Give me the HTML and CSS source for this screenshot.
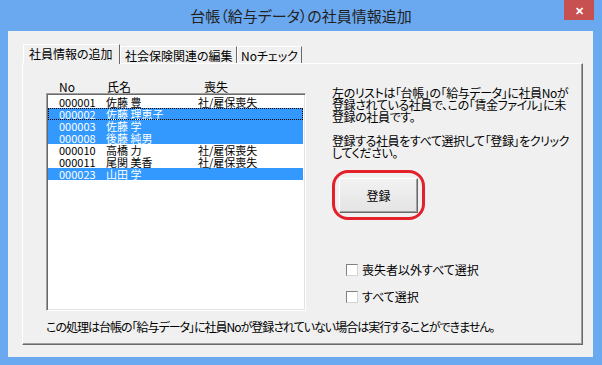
FILE: index.html
```html
<!DOCTYPE html>
<html lang="ja">
<head>
  <meta charset="UTF-8" />
  <title>台帳（給与データ）の社員情報追加</title>
  <link rel="stylesheet" href="styles.css">
</head>
<body>
  <div class="window">
    <div class="titlebar">
      <span class="title">台帳（給与データ）の社員情報追加</span>
      <span class="close">✕</span>
    </div>

    <div class="client">
      <div class="tabs">
        <div class="tab tab-add active">社員情報の追加</div>
        <div class="tab tab-ins">社会保険関連の編集</div>
        <div class="tab tab-no">Noチェック</div>
      </div>

      <div class="panel">
        <div class="panel-body">
          <div class="list-col">
            <div class="list-head">
              <span class="c-no">No</span>
              <span class="c-name">氏名</span>
              <span class="c-loss">喪失</span>
            </div>
            <div class="listbox">
              <div class="row"><span class="c-no">000001</span><span class="c-name">佐藤 豊</span><span class="c-loss">社/雇保喪失</span></div>
              <div class="row selected focus"><span class="c-no">000002</span><span class="c-name">佐藤 理恵子</span><span class="c-loss"></span></div>
              <div class="row selected"><span class="c-no">000003</span><span class="c-name">佐藤 学</span><span class="c-loss"></span></div>
              <div class="row selected"><span class="c-no">000008</span><span class="c-name">後藤 純男</span><span class="c-loss"></span></div>
              <div class="row"><span class="c-no">000010</span><span class="c-name">高橋 力</span><span class="c-loss">社/雇保喪失</span></div>
              <div class="row"><span class="c-no">000011</span><span class="c-name">尾関 美香</span><span class="c-loss">社/雇保喪失</span></div>
              <div class="row selected"><span class="c-no">000023</span><span class="c-name">山田 学</span><span class="c-loss"></span></div>
            </div>
          </div>

          <div class="side">
            <p class="info">
              <span class="line">左のリストは「台帳」の「給与データ」に社員Noが</span>
              <span class="line">登録されている社員で、この「賃金ファイル」に未</span>
              <span class="line">登録の社員です。</span>
            </p>
            <p class="info">
              <span class="line">登録する社員をすべて選択して「登録」をクリック</span>
              <span class="line">してください。</span>
            </p>
            <div class="btn-ring">
              <button class="btn">登録</button>
            </div>
            <label class="check check-first"><span class="box"></span>喪失者以外すべて選択</label>
            <label class="check"><span class="box"></span>すべて選択</label>
          </div>
        </div>

        <p class="note">この処理は台帳の「給与データ」に社員Noが登録されていない場合は実行することができません。</p>
      </div>
    </div>
  </div>
</body>
</html>
```

FILE: styles.css
```css
/* General */
body {
  margin: 0;
  font-family: "Noto Sans CJK JP", "Noto Sans", sans-serif;
  font-size: 12px;
  color: #000;
  font-feature-settings: "palt";
}

p {
  margin: 0;
}

/* Window frame */
.window {
  width: 602px;
  height: 365px;
  background: #6aa8f0;
  display: flex;
  flex-direction: column;
}

.titlebar {
  position: relative;
  height: 31px;
  display: flex;
  align-items: center;
  justify-content: center;
}

.title {
  font-size: 15px;
  color: #222;
  line-height: 31px;
}

.close {
  position: absolute;
  top: 0;
  right: 8px;
  width: 30px;
  height: 20px;
  background: #c75050;
  color: #fff;
  font-size: 11px;
  font-weight: bold;
  line-height: 20px;
  text-align: center;
}

.client {
  margin: 0 9px 8px 8px;
  height: 326px;
  background: #f0f0f0;
  padding: 13px 0 0 14px;
  box-sizing: border-box;
}

/* Tabs */
.tabs {
  display: flex;
  align-items: flex-end;
  margin-left: 1px;
  height: 19px;
  position: relative;
  z-index: 1;
}

.tab {
  height: 17px;
  line-height: 17px;
  box-sizing: border-box;
  padding-left: 4px;
  border-left: 1px solid #fff;
  border-top: 1px solid #fff;
  border-right: 1px solid #696969;
  white-space: nowrap;
  background: #f0f0f0;
}

.tab.active {
  height: 20px;
  line-height: 18px;
  margin-bottom: -1px;
  padding-left: 5px;
}

.tab-add { width: 97px; }
.tab-ins { width: 117px; }
.tab-no { padding: 0 3px 0 3px; }

/* Panel */
.panel {
  width: 561px;
  height: 282px;
  box-sizing: border-box;
  border-top: 1px solid #fff;
  border-left: 1px solid #fff;
  border-right: 1px solid #696969;
  border-bottom: 1px solid #696969;
  box-shadow: inset -1px -1px 0 #a0a0a0;
  padding: 16px 0 0 23px;
}

.panel-body {
  display: flex;
  height: 231px;
}

/* List */
.list-col {
  width: 260px;
  display: flex;
  flex-direction: column;
}

.list-head {
  display: flex;
  height: 13px;
  line-height: 13px;
  padding-left: 13px;
}

.list-head .c-no { width: 48px; }
.list-head .c-name { width: 97px; }

.listbox {
  height: 218px;
  box-sizing: border-box;
  background: #fff;
  border-top: 1px solid #a0a0a0;
  border-left: 1px solid #a0a0a0;
  border-right: 1px solid #fff;
  border-bottom: 1px solid #fff;
  box-shadow: inset 1px 1px 0 #696969, inset -1px -1px 0 #e3e3e3;
  padding: 2px 2px 0 1px;
}

.row {
  display: flex;
  height: 12px;
  line-height: 12px;
  font-size: 11px;
  padding-left: 11px;
  box-sizing: border-box;
  white-space: nowrap;
}

.row.selected {
  background: #3399ff;
  color: #fff;
}

.row.focus {
  outline: 1px dotted #000;
  outline-offset: -1px;
}

.row .c-no { width: 47px; }
.row .c-name { width: 92px; }

/* Right side */
.side {
  margin-left: 26px;
  padding-top: 7px;
  display: flex;
  flex-direction: column;
  align-items: flex-start;
}

.info {
  line-height: 12px;
  letter-spacing: -0.4px;
  margin-bottom: 12px;
}

.info .line {
  display: block;
  white-space: nowrap;
}

.btn-ring {
  margin-top: -1px;
  border: 3px solid #e4202a;
  border-radius: 16px;
  padding: 5px 4px 4px 4px;
}

.btn {
  display: block;
  width: 79px;
  height: 35px;
  font-family: inherit;
  font-size: 12px;
  font-feature-settings: "palt";
  color: #000;
  background: linear-gradient(#f2f2f2, #e4e4e4);
  border-top: 1px solid #fff;
  border-left: 1px solid #fff;
  border-right: 1px solid #696969;
  border-bottom: 1px solid #696969;
  box-shadow: inset -1px -1px 0 #a0a0a0;
  padding: 0;
}

.check {
  display: flex;
  align-items: center;
  height: 12px;
  line-height: 12px;
  margin-left: 14px;
  margin-top: 15px;
}

.check-first {
  margin-top: 44px;
}

.box {
  width: 10px;
  height: 10px;
  background: #fff;
  border-top: 1px solid #808080;
  border-left: 1px solid #808080;
  border-right: 1px solid #d4d4d4;
  border-bottom: 1px solid #d4d4d4;
  margin-right: 4px;
}

/* Footer note */
.note {
  margin-top: 10px;
  line-height: 12px;
  letter-spacing: -1px;
  white-space: nowrap;
}
```
